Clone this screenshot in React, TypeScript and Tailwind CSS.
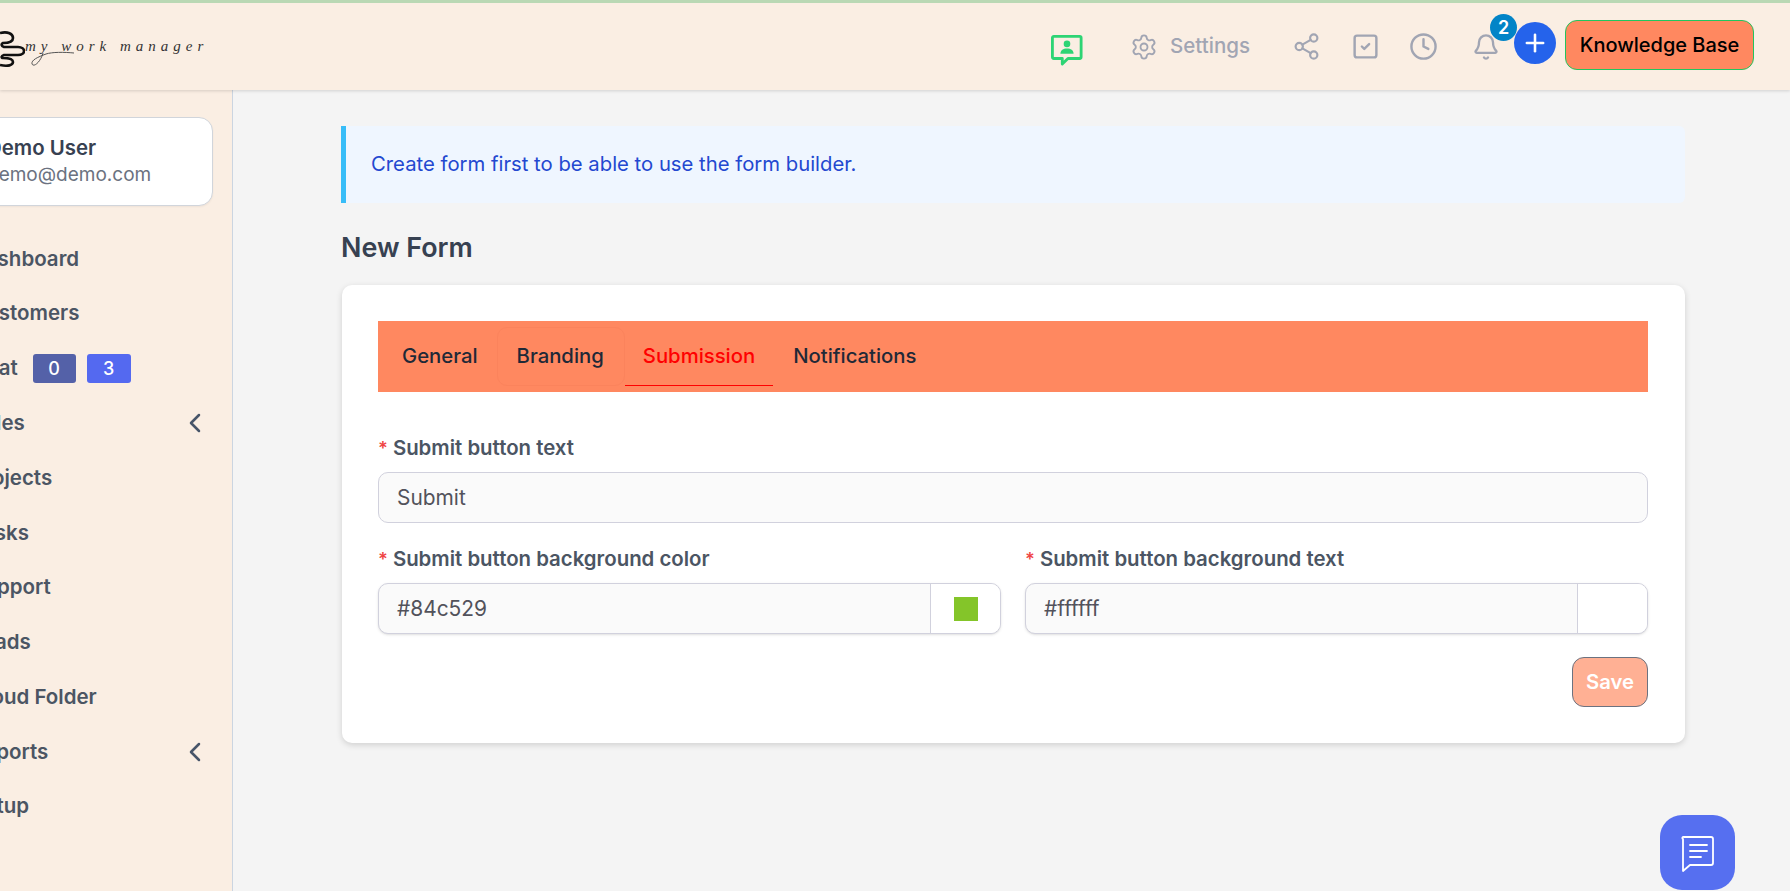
import React from "react";
import { Settings, Share2, SquareCheck, Clock, Bell, Plus, ChevronLeft } from "lucide-react";

const F = "[font-family:Inter,'Noto_Sans',sans-serif]";

function NavItem({ label, chevron, children }: { label: string; chevron?: boolean; children?: React.ReactNode }) {
  return (
    <div className="h-[54.8px] flex items-center justify-between pr-[21px]">
      <div className="flex items-center">
        <span className="text-[20.5px] font-semibold text-[#4b5563] whitespace-nowrap">{label}</span>
        {children}
      </div>
      {chevron && <ChevronLeft className="w-[32px] h-[32px] text-[#475569] shrink-0" strokeWidth={1.9} />}
    </div>
  );
}

function Field({ label, children, className }: { label: string; children: React.ReactNode; className?: string }) {
  return (
    <div className={className}>
      <div className="text-[20.4px] leading-[26px] font-semibold text-[#4b5563] mb-[11px] whitespace-nowrap">
        <span className="text-[#ef4444] mr-[5px] text-[18.3px]">*</span>
        {label}
      </div>
      {children}
    </div>
  );
}

function ColorInput({ value, color }: { value: string; color?: string }) {
  return (
    <div className="flex h-[51px] border border-[#d1d1dd] rounded-[10px] overflow-hidden bg-[#fafafa] shadow-sm">
      <div className="flex-1 px-[18px] flex items-center text-[20.9px] text-[#52525b]">{value}</div>
      <div className="w-[70px] bg-white border-l border-[#d1d1dd] flex items-center justify-center">
        {color && <div className="w-[24px] h-[24px] bg-[#84c529]" />}
      </div>
    </div>
  );
}

export default function App() {
  return (
    <div className={`${F} w-[1790px] h-[891px] overflow-hidden bg-[#f4f4f4] flex flex-col`}>
      <header className="h-[90px] shrink-0 bg-[#faeee3] border-t-[3px] border-[#b9d8b4] shadow-[0_1px_3px_rgba(0,0,0,0.15)] flex items-center justify-between relative z-10">
        <div className="flex items-center relative">
          <svg width="25" height="38" viewBox="0 0 25 38" fill="none" stroke="#111" strokeWidth="2.6" className="shrink-0 mt-[5px]">
            <path d="M0 3 C8 1 13 4 13 8 C13 12 8 13 3 13 C1 14 1 16 4 17 H18 C22 17 24 19 24 21 C24 23 22 25 18 25 H4 C1 26 1 28 3 28 C9 28 13 29 13 32 C13 35 8 37 0 35" />
          </svg>
          <span className="[font-family:'Liberation_Serif',serif] italic text-[15px] tracking-[5px] text-[#333] whitespace-nowrap">my work manager</span>
          <svg width="50" height="22" viewBox="0 0 50 22" fill="none" stroke="#555" strokeWidth="1" className="absolute left-[28px] top-[21px]">
            <path d="M46 7 C36 6 24 6 18 8 C10 11 3 14 4 18 C6 22 13 15 15 7" />
          </svg>
        </div>
        <div className="flex items-center pr-[36px]">
          <svg width="32" height="32" viewBox="0 0 34 34" fill="none" className="mr-[47px] mt-[6px]">
            <path d="M3 2.5h27.5a1.5 1.5 0 0 1 1.5 1.5v20.5a1.5 1.5 0 0 1-1.5 1.5H18l-6 6v-6H3a1.5 1.5 0 0 1-1.5-1.5V4A1.5 1.5 0 0 1 3 2.5z" stroke="#2dd474" strokeWidth="3" strokeLinejoin="round" />
            <circle cx="17" cy="10.5" r="3.5" fill="#2dd474" />
            <path d="M10 21c0-3.5 3-5.5 7-5.5s7 2 7 5.5z" fill="#2dd474" />
          </svg>
          <Settings className="w-[28px] h-[28px] text-[#a1a5b3]" strokeWidth={1.6} />
          <span className="text-[20.5px] text-[#a1a5b3] font-medium ml-[12px] mr-[42px]">Settings</span>
          <Share2 className="w-[29px] h-[29px] text-[#a1a5b3] mr-[30px]" strokeWidth={1.8} />
          <SquareCheck className="w-[29px] h-[29px] text-[#a1a5b3] mr-[29px]" strokeWidth={2} />
          <Clock className="w-[29px] h-[29px] text-[#a1a5b3] mr-[34px]" strokeWidth={2} />
          <div className="relative">
            <Bell className="w-[28px] h-[28px] text-[#a1a5b3]" strokeWidth={2} />
            <span className="absolute -top-[19px] left-[18px] w-[27px] h-[27px] rounded-full bg-[#0284c7] text-white text-[18px] font-semibold flex items-center justify-center">2</span>
          </div>
          <div className="w-[42px] h-[42px] rounded-full bg-[#2563eb] flex items-center justify-center ml-[14px] mr-[9px] relative -top-[4px]">
            <Plus className="w-[28px] h-[28px] text-white" strokeWidth={2.2} />
          </div>
          <div className="h-[50px] w-[189px] rounded-[12px] bg-[#ff8860] border border-[#22c55e] flex items-center justify-center text-[20px] font-medium text-black relative -top-[2px]">Knowledge Base</div>
        </div>
      </header>
      <div className="flex flex-1 min-h-0">
        <aside className="w-[233px] shrink-0 bg-[#faeee3] border-r border-[#cbd5e1] overflow-hidden">
          <div className="-ml-[30px] w-[262px]">
            <div className="mt-[27px] ml-[10px] mr-[19px] h-[89px] bg-white border border-[#d1d5db] rounded-[14px] shadow-xs pl-[6px] pt-[17px] whitespace-nowrap">
              <div className="text-[20.4px] leading-[26px] font-semibold text-[#374151]">Demo User</div>
              <div className="text-[19px] leading-[28px] text-[#6b7280]">demo@demo.com</div>
            </div>
            <div className="mt-[25.5px] ml-[1px]">
              <NavItem label="Dashboard" />
              <NavItem label="Customers" />
              <NavItem label="Chat">
                <span className="ml-[15px] w-[43px] h-[29px] rounded-[3px] bg-[#5461a8] text-white text-[18px] font-medium flex items-center justify-center">0</span>
                <span className="ml-[11px] w-[44px] h-[29px] rounded-[3px] bg-[#5469f0] text-white text-[18px] font-medium flex items-center justify-center">3</span>
              </NavItem>
              <NavItem label="Sales" chevron />
              <NavItem label="Projects" />
              <NavItem label="Tasks" />
              <NavItem label="Support" />
              <NavItem label="Leads" />
              <NavItem label="Cloud Folder" />
              <NavItem label="Reports" chevron />
              <NavItem label="Setup" />
            </div>
          </div>
        </aside>
        <main className="flex-1 min-w-0 pl-[108px] pr-[105px] pt-[36px] relative">
          <div className="h-[77px] bg-[#eff6ff] border-l-[5px] border-[#38bdf8] rounded-r-[6px] flex items-center pl-[25px] text-[20.3px] text-[#2348d0]">
            Create form first to be able to use the form builder.
          </div>
          <h1 className="mt-[27px] text-[26.9px] leading-[34px] font-semibold text-[#374151]">New Form</h1>
          <div className="mt-[21px] ml-[1px] h-[458px] bg-white rounded-[10px] shadow-[0_2px_6px_rgba(0,0,0,0.15)] pl-[36px] pr-[37px] pt-[36px]">
            <div className="h-[71px] bg-[#ff8860] flex items-start px-[5px] pt-[6px]">
              <div className="h-[59px] px-[19px] flex items-center text-[20.3px] font-medium text-[#1f2937]">General</div>
              <div className="h-[59px] pl-[19px] pr-[20px] flex items-center text-[20.3px] font-medium text-[#1f2937] rounded-[10px] border border-[#fb835c]">Branding</div>
              <div className="h-[59px] px-[18px] flex items-center text-[20.3px] font-medium text-[#ff0000] border-b border-[#ff0000]">Submission</div>
              <div className="h-[59px] pl-[20px] pr-[20px] flex items-center text-[20.3px] font-medium text-[#1f2937]">Notifications</div>
            </div>
            <Field label="Submit button text" className="mt-[43px]">
              <div className="h-[51px] border border-[#d1d1dd] rounded-[10px] bg-[#fafafa] px-[18px] flex items-center text-[20.9px] text-[#52525b]">Submit</div>
            </Field>
            <div className="grid grid-cols-2 gap-[24px] mt-[23px]">
              <Field label="Submit button background color">
                <ColorInput value="#84c529" color="#84c529" />
              </Field>
              <Field label="Submit button background text">
                <ColorInput value="#ffffff" />
              </Field>
            </div>
            <div className="flex justify-end mt-[23px]">
              <div className="w-[76px] h-[50px] rounded-[12px] bg-[#ffb094] border border-[#6b7280] text-white text-[20.3px] font-semibold flex items-center justify-center">Save</div>
            </div>
          </div>
          <div className="absolute left-[1427px] top-[725px] w-[75px] h-[75px] rounded-[22px] bg-[#566ff0] flex items-center justify-center">
            <svg width="38" height="38" viewBox="0 0 38 38" fill="none" stroke="#fff" strokeWidth="1.8" strokeLinecap="round" strokeLinejoin="round">
              <path d="M5 3h27a2 2 0 0 1 2 2v24a2 2 0 0 1-2 2H11l-7 6V5a1 1 0 0 1 1-2z" />
              <path d="M11 11h17M11 17h17M11 23h11" />
            </svg>
          </div>
        </main>
      </div>
    </div>
  );
}
